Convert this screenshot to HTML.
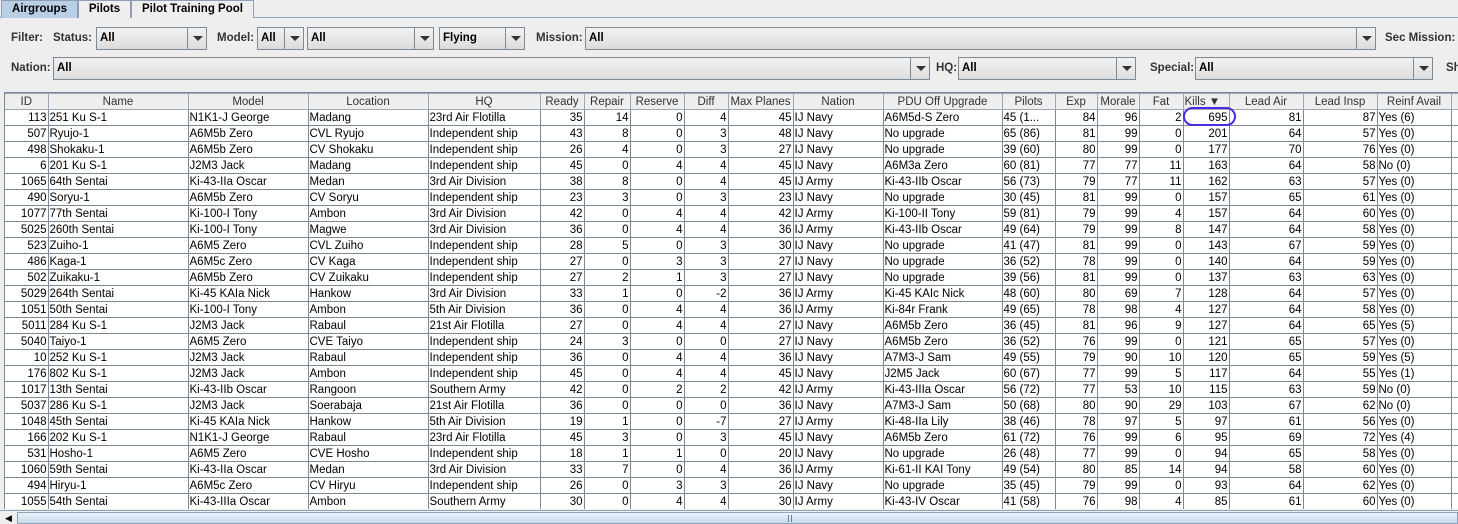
<!DOCTYPE html>
<html><head><style>
*{margin:0;padding:0;box-sizing:border-box}
body{width:1458px;height:524px;overflow:hidden;background:#eeeeee;font-family:"Liberation Sans",sans-serif;font-size:12px;color:#000;position:relative}
.tabs{position:absolute;left:0;top:0;height:18px;width:1458px;border-bottom:1px solid #8ea4bd}
.tab{position:absolute;top:0;height:18px;border:1px solid #8e9fb5;border-bottom:none;font-weight:bold;padding:2px 0;text-align:center;background:#eeeeee;white-space:nowrap;font-size:11.5px}
.tab.sel{background:#b8cfe5}
.lbl{position:absolute;font-weight:bold;color:#333;white-space:nowrap;font-size:11.5px}
.cb{position:absolute;height:23px;border:1px solid #7a8a99;background:linear-gradient(#f2f2f2,#dcdcdc);font-weight:bold;padding:4px 3px;font-size:11.5px;white-space:nowrap}
.cb .ar{position:absolute;right:0;top:0;width:19px;height:21px;border-left:1px solid #7a8a99;background:linear-gradient(#f2f2f2,#dcdcdc)}
.cb .ar:after{content:"";position:absolute;left:5px;top:8px;border-left:5px solid transparent;border-right:5px solid transparent;border-top:5px solid #333}
.tw{position:absolute;left:4px;top:92px;width:1454px;height:417px;background:#fff;border-left:1px solid #7a8a99;border-top:1px solid #7a8a99;overflow:hidden}
table{border-collapse:collapse;table-layout:fixed;width:1494px}
td,th{height:16px;border:1px solid #7a8a99;white-space:nowrap;overflow:hidden;padding:0 1px;font-weight:normal;line-height:14px;font-size:11.5px}
th{background:#eeeeee;text-align:center;color:#333;border-color:#9aa8b8}
td.n{text-align:right}
tr>*:first-child{border-left:none}
.sb{position:absolute;left:0;top:510px;width:1458px;height:14px;background:#eeeeee;border-top:1px solid #8ea4bd}
.thumb{position:absolute;left:17px;top:1px;width:1441px;height:12px;background:linear-gradient(#eaf2fb,#c9d9ea);border:1px solid #8ea4bd}
.oval{position:absolute;left:1183px;top:107px;width:53px;height:19px;border:2px solid #4b2be0;border-radius:10px}
</style></head><body>
<div class="tabs">
<div class="tab sel" style="left:1px;width:77px">Airgroups</div>
<div class="tab" style="left:78px;width:53px">Pilots</div>
<div class="tab" style="left:131px;width:123px">Pilot Training Pool</div>
</div>
<div class="lbl" style="left:11px;top:32px">Filter:</div>
<div class="lbl" style="left:53px;top:32px">Status:</div>
<div class="cb" style="left:96px;top:27px;width:111px">All<div class="ar"></div></div>
<div class="lbl" style="left:217px;top:32px">Model:</div>
<div class="cb" style="left:257px;top:27px;width:47px">All<div class="ar"></div></div>
<div class="cb" style="left:307px;top:27px;width:127px">All<div class="ar"></div></div>
<div class="cb" style="left:439px;top:27px;width:86px">Flying<div class="ar"></div></div>
<div class="lbl" style="left:536px;top:32px">Mission:</div>
<div class="cb" style="left:585px;top:27px;width:791px">All<div class="ar"></div></div>
<div class="lbl" style="left:1385px;top:32px">Sec Mission:</div>
<div class="lbl" style="left:11px;top:62px">Nation:</div>
<div class="cb" style="left:53px;top:57px;width:877px">All<div class="ar"></div></div>
<div class="lbl" style="left:936px;top:62px">HQ:</div>
<div class="cb" style="left:958px;top:57px;width:178px">All<div class="ar"></div></div>
<div class="lbl" style="left:1150px;top:62px">Special:</div>
<div class="cb" style="left:1195px;top:57px;width:238px">All<div class="ar"></div></div>
<div class="lbl" style="left:1446px;top:62px">Sh</div>
<div class="tw"><table>
<colgroup><col style="width:43px"><col style="width:140px"><col style="width:120px"><col style="width:120px"><col style="width:112px"><col style="width:44px"><col style="width:46px"><col style="width:54px"><col style="width:44px"><col style="width:65px"><col style="width:90px"><col style="width:119px"><col style="width:53px"><col style="width:42px"><col style="width:42px"><col style="width:44px"><col style="width:46px"><col style="width:74px"><col style="width:74px"><col style="width:74px"><col style="width:48px"></colgroup>
<tr><th>ID</th><th>Name</th><th>Model</th><th>Location</th><th>HQ</th><th>Ready</th><th>Repair</th><th>Reserve</th><th>Diff</th><th>Max Planes</th><th>Nation</th><th>PDU Off Upgrade</th><th>Pilots</th><th>Exp</th><th>Morale</th><th>Fat</th><th style="text-align:left">Kills &#9660;</th><th>Lead Air</th><th>Lead Insp</th><th>Reinf Avail</th><th></th></tr>
<tr><td class=n>113</td><td>251 Ku S-1</td><td>N1K1-J George</td><td>Madang</td><td>23rd Air Flotilla</td><td class=n>35</td><td class=n>14</td><td class=n>0</td><td class=n>4</td><td class=n>45</td><td>IJ Navy</td><td>A6M5d-S Zero</td><td>45 (1...</td><td class=n>84</td><td class=n>96</td><td class=n>2</td><td class=n>695</td><td class=n>81</td><td class=n>87</td><td>Yes (6)</td><td></td></tr>
<tr><td class=n>507</td><td>Ryujo-1</td><td>A6M5b Zero</td><td>CVL Ryujo</td><td>Independent ship</td><td class=n>43</td><td class=n>8</td><td class=n>0</td><td class=n>3</td><td class=n>48</td><td>IJ Navy</td><td>No upgrade</td><td>65 (86)</td><td class=n>81</td><td class=n>99</td><td class=n>0</td><td class=n>201</td><td class=n>64</td><td class=n>57</td><td>Yes (0)</td><td></td></tr>
<tr><td class=n>498</td><td>Shokaku-1</td><td>A6M5b Zero</td><td>CV Shokaku</td><td>Independent ship</td><td class=n>26</td><td class=n>4</td><td class=n>0</td><td class=n>3</td><td class=n>27</td><td>IJ Navy</td><td>No upgrade</td><td>39 (60)</td><td class=n>80</td><td class=n>99</td><td class=n>0</td><td class=n>177</td><td class=n>70</td><td class=n>76</td><td>Yes (0)</td><td></td></tr>
<tr><td class=n>6</td><td>201 Ku S-1</td><td>J2M3 Jack</td><td>Madang</td><td>Independent ship</td><td class=n>45</td><td class=n>0</td><td class=n>4</td><td class=n>4</td><td class=n>45</td><td>IJ Navy</td><td>A6M3a Zero</td><td>60 (81)</td><td class=n>77</td><td class=n>77</td><td class=n>11</td><td class=n>163</td><td class=n>64</td><td class=n>58</td><td>No (0)</td><td></td></tr>
<tr><td class=n>1065</td><td>64th Sentai</td><td>Ki-43-IIa Oscar</td><td>Medan</td><td>3rd Air Division</td><td class=n>38</td><td class=n>8</td><td class=n>0</td><td class=n>4</td><td class=n>45</td><td>IJ Army</td><td>Ki-43-IIb Oscar</td><td>56 (73)</td><td class=n>79</td><td class=n>77</td><td class=n>11</td><td class=n>162</td><td class=n>63</td><td class=n>57</td><td>Yes (0)</td><td></td></tr>
<tr><td class=n>490</td><td>Soryu-1</td><td>A6M5b Zero</td><td>CV Soryu</td><td>Independent ship</td><td class=n>23</td><td class=n>3</td><td class=n>0</td><td class=n>3</td><td class=n>23</td><td>IJ Navy</td><td>No upgrade</td><td>30 (45)</td><td class=n>81</td><td class=n>99</td><td class=n>0</td><td class=n>157</td><td class=n>65</td><td class=n>61</td><td>Yes (0)</td><td></td></tr>
<tr><td class=n>1077</td><td>77th Sentai</td><td>Ki-100-I Tony</td><td>Ambon</td><td>3rd Air Division</td><td class=n>42</td><td class=n>0</td><td class=n>4</td><td class=n>4</td><td class=n>42</td><td>IJ Army</td><td>Ki-100-II Tony</td><td>59 (81)</td><td class=n>79</td><td class=n>99</td><td class=n>4</td><td class=n>157</td><td class=n>64</td><td class=n>60</td><td>Yes (0)</td><td></td></tr>
<tr><td class=n>5025</td><td>260th Sentai</td><td>Ki-100-I Tony</td><td>Magwe</td><td>3rd Air Division</td><td class=n>36</td><td class=n>0</td><td class=n>4</td><td class=n>4</td><td class=n>36</td><td>IJ Army</td><td>Ki-43-IIb Oscar</td><td>49 (64)</td><td class=n>79</td><td class=n>99</td><td class=n>8</td><td class=n>147</td><td class=n>64</td><td class=n>58</td><td>Yes (0)</td><td></td></tr>
<tr><td class=n>523</td><td>Zuiho-1</td><td>A6M5 Zero</td><td>CVL Zuiho</td><td>Independent ship</td><td class=n>28</td><td class=n>5</td><td class=n>0</td><td class=n>3</td><td class=n>30</td><td>IJ Navy</td><td>No upgrade</td><td>41 (47)</td><td class=n>81</td><td class=n>99</td><td class=n>0</td><td class=n>143</td><td class=n>67</td><td class=n>59</td><td>Yes (0)</td><td></td></tr>
<tr><td class=n>486</td><td>Kaga-1</td><td>A6M5c Zero</td><td>CV Kaga</td><td>Independent ship</td><td class=n>27</td><td class=n>0</td><td class=n>3</td><td class=n>3</td><td class=n>27</td><td>IJ Navy</td><td>No upgrade</td><td>36 (52)</td><td class=n>78</td><td class=n>99</td><td class=n>0</td><td class=n>140</td><td class=n>64</td><td class=n>59</td><td>Yes (0)</td><td></td></tr>
<tr><td class=n>502</td><td>Zuikaku-1</td><td>A6M5b Zero</td><td>CV Zuikaku</td><td>Independent ship</td><td class=n>27</td><td class=n>2</td><td class=n>1</td><td class=n>3</td><td class=n>27</td><td>IJ Navy</td><td>No upgrade</td><td>39 (56)</td><td class=n>81</td><td class=n>99</td><td class=n>0</td><td class=n>137</td><td class=n>63</td><td class=n>63</td><td>Yes (0)</td><td></td></tr>
<tr><td class=n>5029</td><td>264th Sentai</td><td>Ki-45 KAIa Nick</td><td>Hankow</td><td>3rd Air Division</td><td class=n>33</td><td class=n>1</td><td class=n>0</td><td class=n>-2</td><td class=n>36</td><td>IJ Army</td><td>Ki-45 KAIc Nick</td><td>48 (60)</td><td class=n>80</td><td class=n>69</td><td class=n>7</td><td class=n>128</td><td class=n>64</td><td class=n>57</td><td>Yes (0)</td><td></td></tr>
<tr><td class=n>1051</td><td>50th Sentai</td><td>Ki-100-I Tony</td><td>Ambon</td><td>5th Air Division</td><td class=n>36</td><td class=n>0</td><td class=n>4</td><td class=n>4</td><td class=n>36</td><td>IJ Army</td><td>Ki-84r Frank</td><td>49 (65)</td><td class=n>78</td><td class=n>98</td><td class=n>4</td><td class=n>127</td><td class=n>64</td><td class=n>58</td><td>Yes (0)</td><td></td></tr>
<tr><td class=n>5011</td><td>284 Ku S-1</td><td>J2M3 Jack</td><td>Rabaul</td><td>21st Air Flotilla</td><td class=n>27</td><td class=n>0</td><td class=n>4</td><td class=n>4</td><td class=n>27</td><td>IJ Navy</td><td>A6M5b Zero</td><td>36 (45)</td><td class=n>81</td><td class=n>96</td><td class=n>9</td><td class=n>127</td><td class=n>64</td><td class=n>65</td><td>Yes (5)</td><td></td></tr>
<tr><td class=n>5040</td><td>Taiyo-1</td><td>A6M5 Zero</td><td>CVE Taiyo</td><td>Independent ship</td><td class=n>24</td><td class=n>3</td><td class=n>0</td><td class=n>0</td><td class=n>27</td><td>IJ Navy</td><td>A6M5b Zero</td><td>36 (52)</td><td class=n>76</td><td class=n>99</td><td class=n>0</td><td class=n>121</td><td class=n>65</td><td class=n>57</td><td>Yes (0)</td><td></td></tr>
<tr><td class=n>10</td><td>252 Ku S-1</td><td>J2M3 Jack</td><td>Rabaul</td><td>Independent ship</td><td class=n>36</td><td class=n>0</td><td class=n>4</td><td class=n>4</td><td class=n>36</td><td>IJ Navy</td><td>A7M3-J Sam</td><td>49 (55)</td><td class=n>79</td><td class=n>90</td><td class=n>10</td><td class=n>120</td><td class=n>65</td><td class=n>59</td><td>Yes (5)</td><td></td></tr>
<tr><td class=n>176</td><td>802 Ku S-1</td><td>J2M3 Jack</td><td>Ambon</td><td>Independent ship</td><td class=n>45</td><td class=n>0</td><td class=n>4</td><td class=n>4</td><td class=n>45</td><td>IJ Navy</td><td>J2M5 Jack</td><td>60 (67)</td><td class=n>77</td><td class=n>99</td><td class=n>5</td><td class=n>117</td><td class=n>64</td><td class=n>55</td><td>Yes (1)</td><td></td></tr>
<tr><td class=n>1017</td><td>13th Sentai</td><td>Ki-43-IIb Oscar</td><td>Rangoon</td><td>Southern Army</td><td class=n>42</td><td class=n>0</td><td class=n>2</td><td class=n>2</td><td class=n>42</td><td>IJ Army</td><td>Ki-43-IIIa Oscar</td><td>56 (72)</td><td class=n>77</td><td class=n>53</td><td class=n>10</td><td class=n>115</td><td class=n>63</td><td class=n>59</td><td>No (0)</td><td></td></tr>
<tr><td class=n>5037</td><td>286 Ku S-1</td><td>J2M3 Jack</td><td>Soerabaja</td><td>21st Air Flotilla</td><td class=n>36</td><td class=n>0</td><td class=n>0</td><td class=n>0</td><td class=n>36</td><td>IJ Navy</td><td>A7M3-J Sam</td><td>50 (68)</td><td class=n>80</td><td class=n>90</td><td class=n>29</td><td class=n>103</td><td class=n>67</td><td class=n>62</td><td>No (0)</td><td></td></tr>
<tr><td class=n>1048</td><td>45th Sentai</td><td>Ki-45 KAIa Nick</td><td>Hankow</td><td>5th Air Division</td><td class=n>19</td><td class=n>1</td><td class=n>0</td><td class=n>-7</td><td class=n>27</td><td>IJ Army</td><td>Ki-48-IIa Lily</td><td>38 (46)</td><td class=n>78</td><td class=n>97</td><td class=n>5</td><td class=n>97</td><td class=n>61</td><td class=n>56</td><td>Yes (0)</td><td></td></tr>
<tr><td class=n>166</td><td>202 Ku S-1</td><td>N1K1-J George</td><td>Rabaul</td><td>23rd Air Flotilla</td><td class=n>45</td><td class=n>3</td><td class=n>0</td><td class=n>3</td><td class=n>45</td><td>IJ Navy</td><td>A6M5b Zero</td><td>61 (72)</td><td class=n>76</td><td class=n>99</td><td class=n>6</td><td class=n>95</td><td class=n>69</td><td class=n>72</td><td>Yes (4)</td><td></td></tr>
<tr><td class=n>531</td><td>Hosho-1</td><td>A6M5 Zero</td><td>CVE Hosho</td><td>Independent ship</td><td class=n>18</td><td class=n>1</td><td class=n>1</td><td class=n>0</td><td class=n>20</td><td>IJ Navy</td><td>No upgrade</td><td>26 (48)</td><td class=n>77</td><td class=n>99</td><td class=n>0</td><td class=n>94</td><td class=n>65</td><td class=n>58</td><td>Yes (0)</td><td></td></tr>
<tr><td class=n>1060</td><td>59th Sentai</td><td>Ki-43-IIa Oscar</td><td>Medan</td><td>3rd Air Division</td><td class=n>33</td><td class=n>7</td><td class=n>0</td><td class=n>4</td><td class=n>36</td><td>IJ Army</td><td>Ki-61-II KAI Tony</td><td>49 (54)</td><td class=n>80</td><td class=n>85</td><td class=n>14</td><td class=n>94</td><td class=n>58</td><td class=n>60</td><td>Yes (0)</td><td></td></tr>
<tr><td class=n>494</td><td>Hiryu-1</td><td>A6M5c Zero</td><td>CV Hiryu</td><td>Independent ship</td><td class=n>26</td><td class=n>0</td><td class=n>3</td><td class=n>3</td><td class=n>26</td><td>IJ Navy</td><td>No upgrade</td><td>35 (45)</td><td class=n>79</td><td class=n>99</td><td class=n>0</td><td class=n>93</td><td class=n>64</td><td class=n>62</td><td>Yes (0)</td><td></td></tr>
<tr><td class=n>1055</td><td>54th Sentai</td><td>Ki-43-IIIa Oscar</td><td>Ambon</td><td>Southern Army</td><td class=n>30</td><td class=n>0</td><td class=n>4</td><td class=n>4</td><td class=n>30</td><td>IJ Army</td><td>Ki-43-IV Oscar</td><td>41 (58)</td><td class=n>76</td><td class=n>98</td><td class=n>4</td><td class=n>85</td><td class=n>61</td><td class=n>60</td><td>Yes (0)</td><td></td></tr>
</table></div>
<div class="oval"></div>
<div class="sb"><div style="position:absolute;left:5px;top:2px;font-size:9px">&#9664;</div><div class="thumb"><div style="position:absolute;left:770px;top:2px;width:4px;height:7px;border-left:1px solid #6a7f99;border-right:1px solid #6a7f99"></div></div></div>
</body></html>
